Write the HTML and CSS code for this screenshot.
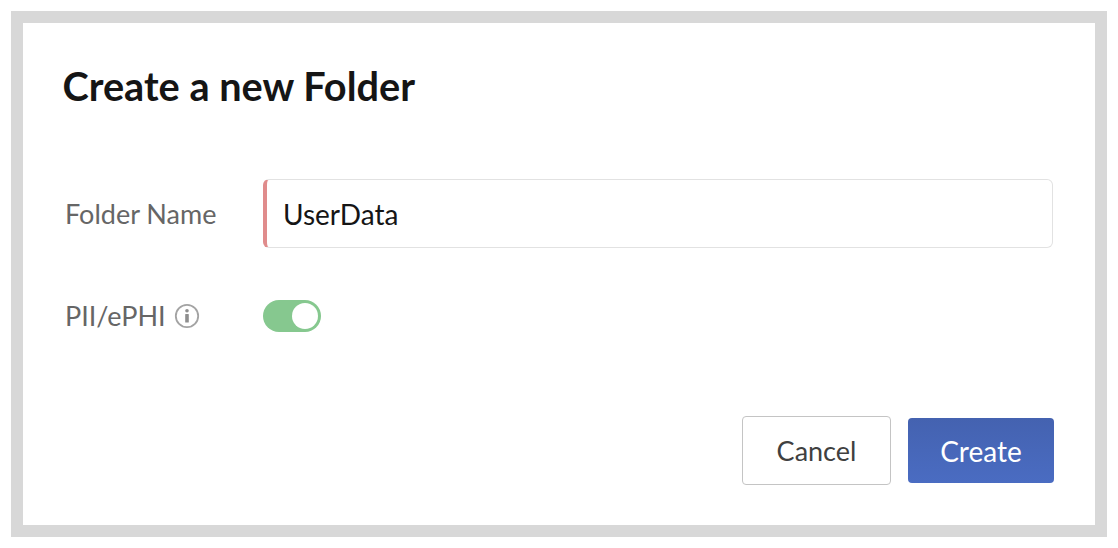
FILE: index.html
```html
<!DOCTYPE html>
<html lang="en">
<head>
    <title>Create a new Folder</title>
    <link rel="stylesheet" href="styles.css">
</head>
<body>
    <div class="dialog">
        <h1>Create a new Folder</h1>
        <div class="row row-name">
            <label class="lbl" for="folder">Folder Name</label>
            <div class="field">UserData</div>
        </div>
        <div class="row row-pii">
            <div class="lbl">PII/ePHI
                <svg class="info" width="26" height="26" viewBox="0 0 26 26">
                    <circle cx="13" cy="13" r="11.2" fill="none" stroke="#a3a3a3" stroke-width="1.8"/>
                    <circle cx="13" cy="7.8" r="1.8" fill="#8e8e8e"/>
                    <rect x="11.2" y="11" width="3.6" height="8.6" rx="0.6" fill="#8e8e8e"/>
                </svg>
            </div>
            <div class="toggle"><span class="knob"></span></div>
        </div>
        <div class="buttons">
            <button type="button" class="btn cancel">Cancel</button>
            <button type="button" class="btn create">Create</button>
        </div>
    </div>
</body>
</html>
```

FILE: styles.css
```css
html, body { margin: 0; background: #fff; }
body {
    width: 1118px;
    height: 548px;
    padding: 11px;
    box-sizing: border-box;
    font-family: "Lato", sans-serif;
    overflow: hidden;
}
.dialog {
    width: 1096px;
    height: 526px;
    box-sizing: border-box;
    border: 12px solid #d8d8d8;
    padding: 39px 42px 0 39.5px;
    background: #fff;
}
h1 {
    margin: 0;
    font-size: 39.7px;
    line-height: 48px;
    font-weight: 700;
    color: #151515;
}
.row { display: flex; align-items: center; }
.row-name { margin-top: 69px; }
.row-pii { margin-top: 51px; }
.lbl {
    width: 198px;
    margin-left: 2.5px;
    display: flex;
    align-items: center;
    gap: 8px;
    font-size: 27px;
    color: #666;
}
.field {
    flex: 1;
    height: 69px;
    box-sizing: border-box;
    border: 1px solid #e2e2e2;
    border-left: 4px solid #e08c8c;
    border-radius: 6px;
    padding-left: 16px;
    line-height: 69px;
    font-size: 28px;
    color: #151515;
}
.toggle {
    width: 58px;
    height: 32px;
    border-radius: 16px;
    background: #86c88f;
    display: flex;
    justify-content: flex-end;
    align-items: center;
    padding-right: 3px;
    box-sizing: border-box;
}
.knob {
    width: 26px;
    height: 26px;
    border-radius: 50%;
    background: #fff;
}
.buttons {
    display: flex;
    justify-content: flex-end;
    align-items: center;
    gap: 17px;
    margin-top: 84px;
    margin-right: -1px;
}
.btn {
    font-family: inherit;
    border-radius: 4px;
    cursor: pointer;
}
.cancel {
    width: 149px;
    height: 69px;
    font-size: 27px;
    background: #fff;
    border: 1px solid #c4c4c4;
    color: #404040;
}
.create {
    width: 146px;
    height: 65px;
    font-size: 28px;
    background: linear-gradient(#4462b0, #4a6cc2);
    border: none;
    color: #fff;
}
```
